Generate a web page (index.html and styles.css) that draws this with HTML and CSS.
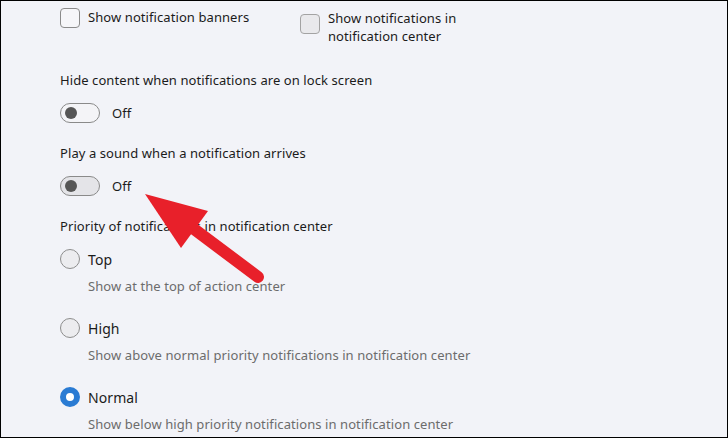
FILE: index.html
```html
<!DOCTYPE html>
<html lang="en">
<head>
  <meta charset="UTF-8">
  <title>Notification settings</title>
  <link rel="stylesheet" href="styles.css">
</head>
<body>
  <div class="frame">
    <div class="checks">
      <label class="check-item first">
        <span class="checkbox"></span>
        <span class="check-text">Show notification banners</span>
      </label>
      <label class="check-item">
        <span class="checkbox disabled"></span>
        <span class="check-text wrap">Show notifications in notification center</span>
      </label>
    </div>

    <div class="label">Hide content when notifications are on lock screen</div>
    <div class="toggle-row">
      <span class="toggle"><span class="knob"></span></span>
      <span class="toggle-text">Off</span>
    </div>

    <div class="label">Play a sound when a notification arrives</div>
    <div class="toggle-row">
      <span class="toggle filled"><span class="knob"></span></span>
      <span class="toggle-text">Off</span>
    </div>

    <div class="label">Priority of notifications in notification center</div>

    <div class="radio-row first">
      <span class="radio"></span>
      <span class="radio-text">Top</span>
    </div>
    <div class="desc">Show at the top of action center</div>

    <div class="radio-row">
      <span class="radio"></span>
      <span class="radio-text">High</span>
    </div>
    <div class="desc">Show above normal priority notifications in notification center</div>

    <div class="radio-row">
      <span class="radio checked"></span>
      <span class="radio-text">Normal</span>
    </div>
    <div class="desc">Show below high priority notifications in notification center</div>

    <svg class="arrow" width="728" height="438" viewBox="0 0 728 438">
      <line x1="190" y1="226" x2="258" y2="277" stroke="#e8202a" stroke-width="12" stroke-linecap="round"/>
      <polygon points="145,194 208,211 181,248" fill="#e8202a"/>
    </svg>
  </div>
</body>
</html>
```

FILE: styles.css
```css
html, body {
  margin: 0;
  padding: 0;
}
body {
  font-family: "Noto Sans", "Open Sans", sans-serif;
  font-size: 13px;
  letter-spacing: 0.08px;
  color: #1b1b1b;
  background: #f2f3f8;
}
.frame {
  position: relative;
  box-sizing: border-box;
  width: 728px;
  height: 438px;
  border: 1px solid #000;
  padding: 7px 0 0 59px;
  overflow: hidden;
  background: #f2f3f8;
}
.checks {
  display: flex;
}
.check-item {
  display: flex;
  align-items: flex-start;
  gap: 8px;
  width: 240px;
}
.checkbox {
  flex: none;
  box-sizing: border-box;
  width: 20px;
  height: 20px;
  border: 1px solid #8b8b8b;
  border-radius: 4px;
  background: #f6f6f9;
}
.checkbox.disabled {
  margin-top: 6px;
  border-color: #a3a3a3;
  background: #e9e9ec;
}
.check-text {
  line-height: 18px;
}
.check-text.wrap {
  margin-top: 1px;
  width: 140px;
}
.label {
  margin-top: 25px;
  line-height: 20px;
}
.toggle-row + .label {
  margin-top: 20px;
}
.toggle-row {
  display: flex;
  align-items: center;
  gap: 12px;
  margin-top: 13px;
  height: 20px;
}
.toggle {
  box-sizing: border-box;
  width: 40px;
  height: 20px;
  border: 1px solid #8a8a8a;
  border-radius: 10px;
  display: flex;
  align-items: center;
  padding-left: 4px;
  background: #f4f4f7;
}
.toggle.filled {
  background: #e4e4e8;
}
.knob {
  width: 12px;
  height: 12px;
  border-radius: 50%;
  background: #565656;
}
.radio-row {
  display: flex;
  align-items: center;
  gap: 8px;
  margin-top: 22px;
  height: 20px;
}
.radio-row.first {
  margin-top: 13px;
}
.radio {
  box-sizing: border-box;
  width: 20px;
  height: 20px;
  border: 1px solid #8d8d8d;
  border-radius: 50%;
  background: #ececef;
}
.radio.checked {
  border: 6px solid #2a7bd3;
  background: #fff;
}
.radio-text {
  font-size: 14px;
}
.desc {
  margin-top: 7px;
  padding-left: 28px;
  line-height: 20px;
  color: #6c6c6c;
}
.arrow {
  position: absolute;
  left: -1px;
  top: -1px;
}
```
